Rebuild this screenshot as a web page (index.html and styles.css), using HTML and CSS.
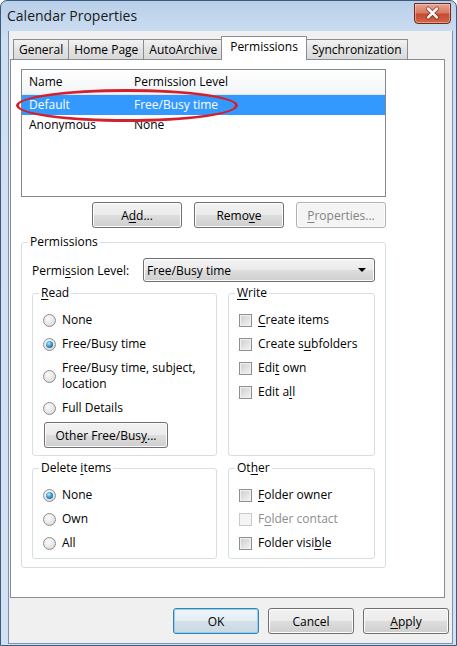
FILE: index.html
```html
<!DOCTYPE html>
<html lang="en">
<head>
    <meta charset="UTF-8">
    <meta name="viewport" content="width=device-width, initial-scale=1.0">
    <title>Calendar Properties</title>
    <link rel="stylesheet" href="styles.css">
</head>
<body>
    <div class="window">
        <div class="titlebar">
            <span class="title">Calendar Properties</span>
            <button class="close" aria-label="Close">
                <svg width="36" height="21" viewBox="0 0 36 21">
                    <path d="M13.5 5.5 L22.5 14.5 M22.5 5.5 L13.5 14.5" stroke="#5e1a12" stroke-width="4.4" stroke-linecap="round" fill="none" opacity="0.55"/>
                    <path d="M13.5 5.5 L22.5 14.5 M22.5 5.5 L13.5 14.5" stroke="#ffffff" stroke-width="2.6" stroke-linecap="round" fill="none"/>
                </svg>
            </button>
        </div>

        <div class="client">
            <div class="tabs">
                <div class="tab">General</div>
                <div class="tab">Home Page</div>
                <div class="tab">AutoArchive</div>
                <div class="tab active">Permissions</div>
                <div class="tab">Synchronization</div>
            </div>

            <div class="panel">
                <div class="listview">
                    <div class="lv-head">
                        <span class="col-name">Name</span>
                        <span>Permission Level</span>
                    </div>
                    <div class="lv-row selected">
                        <span class="col-name">Default</span>
                        <span>Free/Busy time</span>
                    </div>
                    <div class="lv-row">
                        <span class="col-name">Anonymous</span>
                        <span>None</span>
                    </div>
                    <div class="ring"></div>
                </div>

                <div class="list-buttons">
                    <button class="btn">A<u>d</u>d...</button>
                    <button class="btn">Remo<u>v</u>e</button>
                    <button class="btn disabled"><u>P</u>roperties...</button>
                </div>

                <fieldset class="group perms">
                    <legend>Permissions</legend>
                    <div class="level-row">
                        <span class="level-label">Permi<u>s</u>sion Level:</span>
                        <div class="combo">
                            <span>Free/Busy time</span>
                            <span class="arrow"></span>
                        </div>
                    </div>

                    <div class="groups">
                        <fieldset class="group tall">
                            <legend><u>R</u>ead</legend>
                            <div class="opt"><span class="radio"></span><span>None</span></div>
                            <div class="opt"><span class="radio checked"></span><span>Free/Busy time</span></div>
                            <div class="opt"><span class="radio"></span><span>Free/Busy time, subject,<br>location</span></div>
                            <div class="opt"><span class="radio"></span><span>Full Details</span></div>
                            <button class="btn other">Other Free/Bus<u>y</u>...</button>
                        </fieldset>

                        <fieldset class="group tall">
                            <legend><u>W</u>rite</legend>
                            <div class="opt"><span class="check"></span><span><u>C</u>reate items</span></div>
                            <div class="opt"><span class="check"></span><span>Create s<u>u</u>bfolders</span></div>
                            <div class="opt"><span class="check"></span><span>Edi<u>t</u> own</span></div>
                            <div class="opt"><span class="check"></span><span>Edit a<u>l</u>l</span></div>
                        </fieldset>

                        <fieldset class="group short">
                            <legend>Delete <u>i</u>tems</legend>
                            <div class="opt"><span class="radio checked"></span><span>None</span></div>
                            <div class="opt"><span class="radio"></span><span>Own</span></div>
                            <div class="opt"><span class="radio"></span><span>All</span></div>
                        </fieldset>

                        <fieldset class="group short">
                            <legend>Ot<u>h</u>er</legend>
                            <div class="opt"><span class="check"></span><span><u>F</u>older owner</span></div>
                            <div class="opt off"><span class="check"></span><span>F<u>o</u>lder contact</span></div>
                            <div class="opt"><span class="check"></span><span>Folder visi<u>b</u>le</span></div>
                        </fieldset>
                    </div>
                </fieldset>
            </div>

            <div class="dialog-buttons">
                <button class="btn default">OK</button>
                <button class="btn">Cancel</button>
                <button class="btn"><u>A</u>pply</button>
            </div>
        </div>
    </div>
</body>
</html>
```

FILE: styles.css
```css
body, html {
    margin: 0;
    padding: 0;
    background: #ffffff;
}

body {
    font-family: "Open Sans", "DejaVu Sans", sans-serif;
    font-size: 12px;
    color: #000;
}

u {
    text-decoration-thickness: 1px;
    text-underline-offset: 2px;
}

.window {
    width: 457px;
    height: 646px;
    box-sizing: border-box;
    border: 1px solid #3d5a7c;
    border-radius: 7px 7px 0 0;
    padding: 0 3px 1px 7px;
    background: linear-gradient(#b9d0ea, #cfdff2 40px, #d3e2f3);
    display: flex;
    flex-direction: column;
}

/* title bar */
.titlebar {
    height: 30px;
    flex: none;
    display: flex;
    justify-content: space-between;
    align-items: flex-start;
    margin-left: -7px;
    margin-right: -3px;
}

.title {
    font-size: 14px;
    line-height: 30px;
    padding-left: 6px;
    color: #1a1a1a;
}

.close {
    width: 37px;
    height: 21px;
    margin: 2px 5px 0 0;
    padding: 0;
    border: 1px solid #6d2a20;
    border-radius: 0 0 4px 4px;
    background: linear-gradient(#e9a493, #d97a62 45%, #c54a30 55%, #d3674a);
    box-shadow: inset 0 0 0 1px rgba(255, 220, 200, 0.45);
    display: flex;
    align-items: center;
    justify-content: center;
}

.close svg {
    display: block;
}

/* client area */
.client {
    flex: 1;
    background: #f0f0f0;
    border: 1px solid #7a93b2;
    border-top: none;
    display: flex;
    flex-direction: column;
}

.tabs {
    display: flex;
    align-items: flex-end;
    height: 23px;
    margin-top: 5px;
    padding-left: 4px;
}

.tab {
    height: 20px;
    box-sizing: border-box;
    line-height: 19px;
    padding: 0 5px;
    border: 1px solid #898c95;
    border-bottom: none;
    margin-right: -1px;
    background: linear-gradient(#f2f2f2, #e3e3e3 50%, #d9d9d9);
}

.tab.active {
    height: 24px;
    line-height: 20px;
    margin: 0 -1px -1px -1px;
    padding: 0 8px;
    background: #ffffff;
    position: relative;
    z-index: 1;
}

.panel {
    height: 539px;
    width: 435px;
    box-sizing: border-box;
    margin-left: 1px;
    border: 1px solid #898c95;
    background: #ffffff;
    padding: 9px 10px 0;
}

/* list of users */
.listview {
    position: relative;
    width: 365px;
    height: 128px;
    box-sizing: border-box;
    border: 1px solid #828790;
    background: #ffffff;
}

.lv-head {
    display: flex;
    height: 24px;
    line-height: 24px;
    padding-left: 7px;
    background: linear-gradient(#ffffff, #f3f4f6);
    border-bottom: 1px solid #e3e5e9;
}

.lv-row {
    display: flex;
    height: 20px;
    line-height: 20px;
    padding-left: 7px;
}

.lv-row.selected {
    background: #3399ff;
    color: #ffffff;
}

.col-name {
    width: 105px;
}

.ring {
    position: absolute;
    left: -6px;
    top: 19px;
    width: 222px;
    height: 33px;
    box-sizing: border-box;
    border: 3px solid #d4202c;
    border-radius: 50%;
}

.list-buttons {
    display: flex;
    justify-content: flex-end;
    gap: 12px;
    width: 365px;
    margin-top: 5px;
}

/* buttons */
.btn {
    font: inherit;
    color: #000;
    width: 90px;
    height: 26px;
    padding: 0;
    border: 1px solid #707070;
    border-radius: 3px;
    background: linear-gradient(#f2f2f2, #ebebeb 48%, #dddddd 52%, #cfcfcf);
    box-shadow: inset 0 0 0 1px #fcfcfc;
}

.btn.disabled {
    color: #838383;
    border-color: #adb2b5;
    background: #f4f4f4;
}

.btn.default {
    border-color: #3c7fb1;
    box-shadow: inset 0 0 0 1px #8ed2f2;
    background: linear-gradient(#eef5fa, #e3edf4 48%, #d4e1ea 52%, #c9d8e3);
}

.btn.other {
    width: 124px;
    margin: 2px 0 0 1px;
}

/* group boxes */
.group {
    margin: 0;
    min-width: 0;
    border: 1px solid #d5dfe5;
    border-radius: 3px;
    padding: 6px 10px 8px;
}

.group legend {
    line-height: 16px;
    padding: 0 2px;
    margin-left: -4px;
}

.perms {
    width: 365px;
    box-sizing: border-box;
    margin-top: 6px;
    padding-top: 8px;
}

.level-row {
    display: flex;
    align-items: center;
    height: 24px;
}

.level-label {
    width: 111px;
}

.combo {
    flex: 1;
    height: 24px;
    box-sizing: border-box;
    border: 1px solid #707070;
    border-radius: 3px;
    background: linear-gradient(#f2f2f2, #ebebeb 48%, #dddddd 52%, #cfcfcf);
    box-shadow: inset 0 0 0 1px #fcfcfc;
    display: flex;
    align-items: center;
    justify-content: space-between;
    padding: 0 8px 0 3px;
}

.arrow {
    width: 0;
    height: 0;
    border-left: 4px solid transparent;
    border-right: 4px solid transparent;
    border-top: 4px solid #000;
}

.groups {
    display: grid;
    grid-template-columns: 185px 147px;
    column-gap: 11px;
    row-gap: 4px;
    margin-top: 3px;
}

.group.tall {
    padding-top: 7px;
    padding-bottom: 7px;
}

.group.short {
    padding-top: 7px;
    padding-bottom: 3px;
}

.opt {
    display: flex;
    align-items: center;
    gap: 6px;
    padding: 4px 0;
    line-height: 16px;
}

.opt.off {
    color: #8d8d8d;
}

.radio {
    flex: none;
    width: 13px;
    height: 13px;
    box-sizing: border-box;
    border: 1px solid #8e8f8f;
    border-radius: 50%;
    background: radial-gradient(circle at 40% 35%, #fbfbfb, #e6e6e6 55%, #cbcbcb);
    display: flex;
    align-items: center;
    justify-content: center;
}

.radio.checked::after {
    content: "";
    width: 7px;
    height: 7px;
    border-radius: 50%;
    background: radial-gradient(circle at 40% 35%, #b7ecff, #3b9ad0 45%, #12456f);
}

.check {
    flex: none;
    width: 13px;
    height: 13px;
    box-sizing: border-box;
    border: 1px solid #8f8f8f;
    background: linear-gradient(135deg, #cdcdcd, #f4f4f4);
    box-shadow: inset 0 0 0 1px #f1f1f1;
}

.opt.off .check {
    border-color: #c9c9c9;
    background: #f4f4f4;
    box-shadow: none;
}

.dialog-buttons {
    display: flex;
    justify-content: flex-end;
    gap: 9px;
    margin-top: 10px;
    padding-right: 3px;
}

.dialog-buttons .btn {
    width: 86px;
}
```
